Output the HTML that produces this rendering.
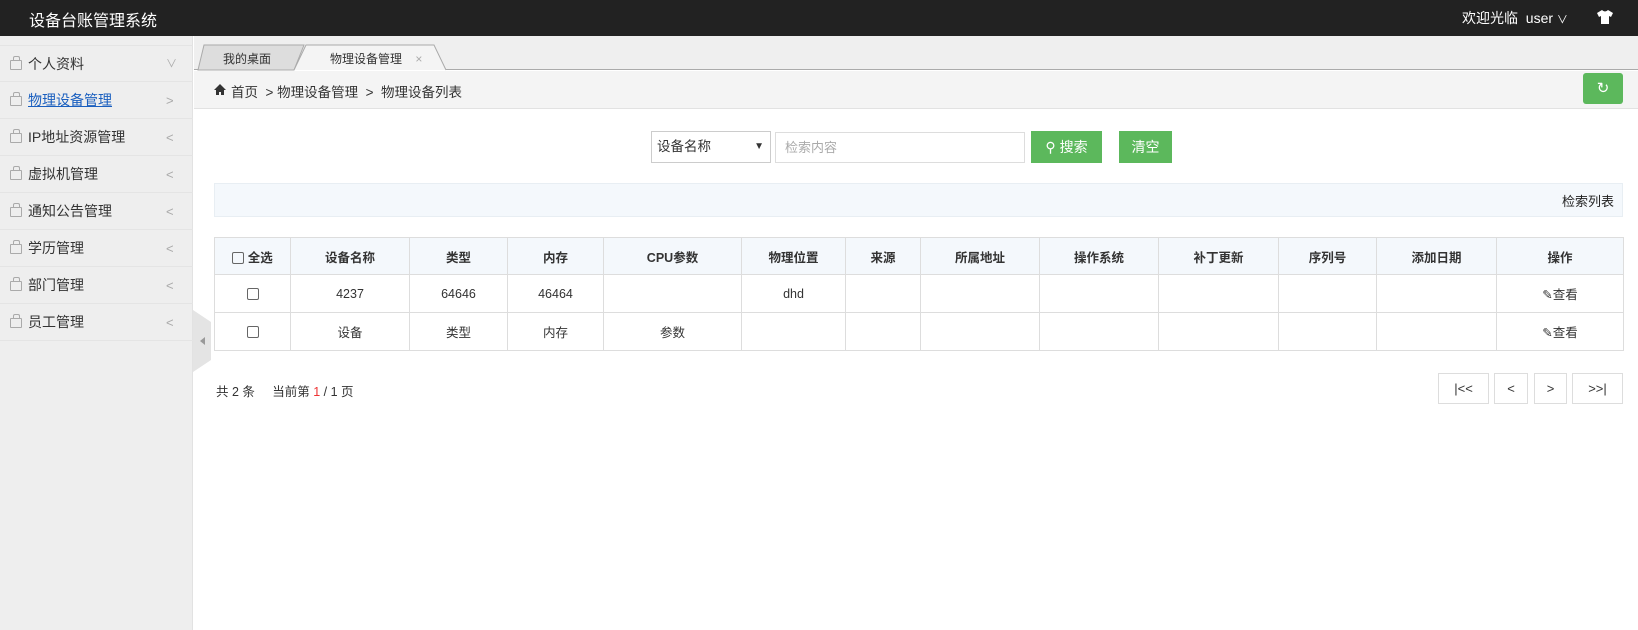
<!DOCTYPE html>
<html><head><meta charset="utf-8"><style>
*{margin:0;padding:0;box-sizing:border-box}
body{width:1638px;height:630px;overflow:hidden;background:#fff;font-family:"Liberation Sans","Noto Sans CJK SC",sans-serif;color:#333;position:relative;font-size:13px}
.abs{position:absolute}
.hd{left:0;top:0;width:1638px;height:36px;background:#222}
.side{left:0;top:36px;width:193px;height:594px;background:#eee;border-right:1px solid #e2e2e2}
.item{position:absolute;left:0;width:193px;height:37px;border-bottom:1px solid #e4e4e4;font-size:14px;color:#333;line-height:37px}
.item .ic{position:absolute;left:10px;top:14px;width:12px;height:10px;border:1px solid #aaa;border-radius:1px}
.item .ic:before{content:"";position:absolute;left:2px;top:-5px;width:5px;height:4px;border:1px solid #aaa;border-bottom:none;border-radius:2px 2px 0 0}
.item .t{position:absolute;left:28px}
.item .a{position:absolute;left:166px;color:#aaa;font-size:13px}
table{position:absolute;left:214px;top:237px;border-collapse:collapse;table-layout:fixed;width:1409px}
td,th{border:1px solid #ddd;text-align:center;font-size:12.5px;height:38px;color:#333;font-weight:normal}
th{background:#f4f8fc;font-weight:bold;height:37px}
.cb{display:inline-block;width:12px;height:12px;border:1px solid #666;border-radius:2px;vertical-align:middle}
.pg{position:absolute;top:373px;height:31px;border:1px solid #ddd;text-align:center;line-height:29px;font-size:13px}
.btn{position:absolute;background:#5cb85c;color:#fff;font-size:14px;text-align:center}
</style></head><body>
<div class="abs hd"></div>
<div class="abs" style="left:29px;top:7px;color:#fff;font-size:16px">设备台账管理系统</div>
<div class="abs" style="left:1462px;top:8px;color:#fff;font-size:14px">欢迎光临&nbsp; user <span style="font-size:11px">∨</span></div>
<svg class="abs" style="left:1596px;top:10px" width="18" height="14" viewBox="0 0 18 14"><path d="M6 0 L1 3 L3 7 L5 6 V14 H13 V6 L15 7 L17 3 L12 0 Q9 3 6 0Z" fill="#fff"/></svg>
<div class="abs side"></div>
<div class="item" style="top:45px;border-top:1px solid #e4e4e4"><span class="ic"></span><span class="t">个人资料</span><span class="a" style="font-size:11px">∨</span></div>
<div class="item" style="top:82px"><span class="ic"></span><span class="t" style="color:#1a5fbf;text-decoration:underline">物理设备管理</span><span class="a">&gt;</span></div>
<div class="item" style="top:119px"><span class="ic"></span><span class="t">IP地址资源管理</span><span class="a">&lt;</span></div>
<div class="item" style="top:156px"><span class="ic"></span><span class="t">虚拟机管理</span><span class="a">&lt;</span></div>
<div class="item" style="top:193px"><span class="ic"></span><span class="t">通知公告管理</span><span class="a">&lt;</span></div>
<div class="item" style="top:230px"><span class="ic"></span><span class="t">学历管理</span><span class="a">&lt;</span></div>
<div class="item" style="top:267px"><span class="ic"></span><span class="t">部门管理</span><span class="a">&lt;</span></div>
<div class="item" style="top:304px"><span class="ic"></span><span class="t">员工管理</span><span class="a">&lt;</span></div>
<svg class="abs" style="left:193px;top:310px" width="19" height="62"><path d="M0 0 L18 12 V50 L0 62Z" fill="#e4e4e4"/><path d="M12 27 L7 31 L12 35Z" fill="#999"/></svg>
<div class="abs" style="left:194px;top:36px;width:1444px;height:34px;background:#efefef;border-bottom:1px solid #aaa"></div>
<svg class="abs" style="left:194px;top:44px" width="260" height="27"><path d="M4 26 L10 1 H110 L100 26Z" fill="#ddd" stroke="#aaa"/><path d="M100 26 L112 1 H240 L252 26" fill="#f4f4f4" stroke="#aaa"/></svg>
<div class="abs" style="left:223px;top:50px;font-size:12px">我的桌面</div>
<div class="abs" style="left:330px;top:50px;font-size:12px">物理设备管理 <span style="color:#aaa;margin-left:10px">×</span></div>
<div class="abs" style="left:194px;top:71px;width:1444px;height:38px;background:#f4f4f4;border-bottom:1px solid #e2e2e2"></div>
<svg class="abs" style="left:214px;top:84px" width="12" height="11" viewBox="0 0 12 11"><path d="M6 0 L0 6 H2 V11 H5 V8 H7 V11 H10 V6 H12Z" fill="#333"/></svg>
<div class="abs" style="left:231px;top:81px;font-size:13.5px">首页 &nbsp;&gt; 物理设备管理 &nbsp;&gt;&nbsp; 物理设备列表</div>
<div class="btn" style="left:1583px;top:73px;width:40px;height:31px;border-radius:3px;line-height:31px;font-size:15px">↻</div>
<div class="abs" style="left:651px;top:131px;width:120px;height:32px;border:1px solid #ccc;font-size:13.5px;line-height:30px;padding-left:5px">设备名称<span style="position:absolute;right:6px;font-size:10px">▼</span></div>
<div class="abs" style="left:775px;top:132px;width:250px;height:31px;border:1px solid #ddd;font-size:13px;line-height:29px;padding-left:9px;color:#aaa">检索内容</div>
<div class="btn" style="left:1031px;top:131px;width:71px;height:32px;line-height:32px">&#9906; 搜索</div>
<div class="btn" style="left:1119px;top:131px;width:53px;height:32px;line-height:32px">清空</div>
<div class="abs" style="left:214px;top:183px;width:1409px;height:34px;background:#f4f8fc;border:1px solid #e8eef3"></div>
<div class="abs" style="left:1562px;top:191px;font-size:13px;color:#222">检索列表</div>
<table>
<colgroup><col style="width:76px"><col style="width:119px"><col style="width:98px"><col style="width:96px"><col style="width:138px"><col style="width:104px"><col style="width:75px"><col style="width:119px"><col style="width:119px"><col style="width:120px"><col style="width:98px"><col style="width:120px"><col style="width:127px"></colgroup>
<tr><th><span class="cb"></span> 全选</th><th>设备名称</th><th>类型</th><th>内存</th><th>CPU参数</th><th>物理位置</th><th>来源</th><th>所属地址</th><th>操作系统</th><th>补丁更新</th><th>序列号</th><th>添加日期</th><th>操作</th></tr>
<tr><td><span class="cb"></span></td><td>4237</td><td>64646</td><td>46464</td><td></td><td>dhd</td><td></td><td></td><td></td><td></td><td></td><td></td><td>✎查看</td></tr>
<tr><td><span class="cb"></span></td><td>设备</td><td>类型</td><td>内存</td><td>参数</td><td></td><td></td><td></td><td></td><td></td><td></td><td></td><td>✎查看</td></tr>
</table>
<div class="abs" style="left:216px;top:381px;font-size:12.5px">共 2 条 &nbsp; &nbsp; 当前第 <span style="color:#e33">1</span> / 1 页</div>
<div class="pg" style="left:1438px;width:51px">|&lt;&lt;</div>
<div class="pg" style="left:1494px;width:34px">&lt;</div>
<div class="pg" style="left:1534px;width:33px">&gt;</div>
<div class="pg" style="left:1572px;width:51px">&gt;&gt;|</div>
</body></html>
